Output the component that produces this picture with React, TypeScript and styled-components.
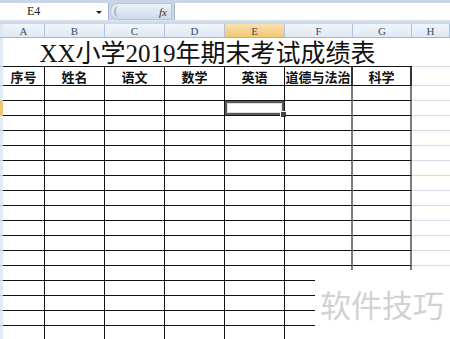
import React from 'react'
import styled, { createGlobalStyle, css } from 'styled-components'

const GlobalStyle = createGlobalStyle`
  html, body {
    margin: 0;
    padding: 0;
    background: #fff;
    overflow: hidden;
  }
  body {
    font-family: "Liberation Serif", "Noto Sans CJK SC", serif;
  }
`

const columns = ['A', 'B', 'C', 'D', 'E', 'F', 'G', 'H']
const headers = ['序号', '姓名', '语文', '数学', '英语', '道德与法治', '科学']
const DATA_ROWS = 17
const SELECTED_ROW = 1
const SELECTED_COL = 4

type Edge = 'black' | 'gray'

const App: React.FC = () => {
    const edgeOf = (i: number): Edge => (i >= 5 ? 'gray' : 'black')

    return (
        <StWindow>
            <GlobalStyle />
            <StFormulaBar>
                <StNameBox>
                    <StNameText>E4</StNameText>
                    <StArrow />
                </StNameBox>
                <StCapsule>
                    <StCapsuleKnob />
                    <StFx>fx</StFx>
                </StCapsule>
                <StFormulaInput />
            </StFormulaBar>
            <StBand />
            <StSheet>
                <StCorner />
                {columns.map((c, i) => (
                    <StColHead key={c} $active={i === SELECTED_COL}>
                        {c}
                    </StColHead>
                ))}

                <StRowHead />
                <StTitle>XX小学2019年期末考试成绩表</StTitle>
                <StGridCell />

                <StRowHead />
                {headers.map((h, i) => (
                    <StHeadCell key={h} $edge={edgeOf(i)}>
                        {h}
                    </StHeadCell>
                ))}
                <StGridCell />

                {Array.from({ length: DATA_ROWS }).map((_, r) => (
                    <React.Fragment key={r}>
                        <StRowHead $active={r === SELECTED_ROW} />
                        {headers.map((h, i) => (
                            <StDataCell
                                key={h}
                                $edge={edgeOf(i)}
                                $selected={r === SELECTED_ROW && i === SELECTED_COL}
                            />
                        ))}
                        <StGridCell />
                    </React.Fragment>
                ))}
            </StSheet>
            <StWatermark>软件技巧</StWatermark>
        </StWindow>
    )
}

const StWindow = styled.div`
    position: relative;
    width: 450px;
    height: 339px;
    overflow: hidden;
    background: #fff;
`

const StFormulaBar = styled.div`
    display: flex;
    align-items: stretch;
    height: 20px;
    padding-top: 3px;
    background: #c9d6e7;
    box-sizing: border-box;
`

const StNameBox = styled.div`
    position: relative;
    display: flex;
    align-items: center;
    width: 108px;
    background: #fff;
    border-right: 1px solid #a7b9d0;
`

const StNameText = styled.span`
    margin-left: 27px;
    font-family: "Liberation Serif", serif;
    font-size: 12px;
    color: #222;
`

const StArrow = styled.span`
    position: absolute;
    left: 96px;
    top: 8px;
    width: 0;
    height: 0;
    border-left: 3px solid transparent;
    border-right: 3px solid transparent;
    border-top: 3px solid #222;
`

const StCapsule = styled.div`
    display: flex;
    align-items: center;
    justify-content: space-between;
    width: 62px;
    margin-left: 1px;
    padding: 0 4px 0 3px;
    box-sizing: border-box;
    border-radius: 9px 0 0 9px;
    background: linear-gradient(#eef2f8, #cfdae9);
    border: 1px solid #b6c5d9;
`

const StCapsuleKnob = styled.span`
    width: 9px;
    height: 11px;
    border-radius: 50%;
    border-left: 2px solid #a9b8cc;
    box-sizing: border-box;
`

const StFx = styled.span`
    font-family: "Liberation Serif", serif;
    font-style: italic;
    font-size: 11px;
    color: #333;
`

const StFormulaInput = styled.div`
    flex: 1;
    margin-left: 2px;
    background: #fff;
    border-left: 1px solid #a7b9d0;
`

const StBand = styled.div`
    height: 4px;
    background: linear-gradient(#dbe4f0, #c8d5e6);
`

const StSheet = styled.div`
    display: grid;
    grid-template-columns: 3px 42px 60px 60px 60px 60px 68px 59px 1fr;
    grid-template-rows: 14px 29px 19px;
    grid-auto-rows: 15px;
`

const StCorner = styled.div`
    background: #dfe7f2;
    border-bottom: 1px solid #9eb6ce;
`

const StColHead = styled.div<{ $active?: boolean }>`
    display: flex;
    align-items: center;
    justify-content: center;
    box-sizing: border-box;
    font-family: "Liberation Serif", serif;
    font-size: 11px;
    color: #3c4d62;
    border-right: 1px solid #b2c3d8;
    border-bottom: 1px solid #9eb6ce;
    background: ${(p) =>
        p.$active ? 'linear-gradient(#fae2b0, #f3c66f)' : 'linear-gradient(#f1f5fa, #dfe8f3)'};
`

const StRowHead = styled.div<{ $active?: boolean }>`
    box-sizing: border-box;
    background: ${(p) => (p.$active ? '#f3c66f' : '#e2eaf4')};
    border-bottom: 1px solid #b9c9dc;
`

const StTitle = styled.div`
    grid-column: span 7;
    display: flex;
    align-items: center;
    justify-content: center;
    box-sizing: border-box;
    padding-top: 2px;
    border-bottom: 1px solid #111;
    font-family: "Liberation Serif", "Noto Sans CJK SC", serif;
    font-size: 25px;
    line-height: 1;
    color: #111;
    white-space: nowrap;
`

const edgeStyle = css<{ $edge: Edge }>`
    border-right: ${(p) => (p.$edge === 'gray' ? '2px solid #7c7c7c' : '1px solid #111')};
    border-bottom: 1px solid #111;
`

const StHeadCell = styled.div<{ $edge: Edge }>`
    display: flex;
    align-items: center;
    justify-content: center;
    box-sizing: border-box;
    white-space: nowrap;
    font-family: "Noto Sans CJK SC", sans-serif;
    font-weight: 700;
    font-size: 13px;
    color: #111;
    ${edgeStyle}
    border-right-color: ${(p) => (p.$edge === 'gray' ? '#333' : '#111')};
`

const StDataCell = styled.div<{ $edge: Edge; $selected?: boolean }>`
    position: relative;
    box-sizing: border-box;
    ${edgeStyle}
    ${(p) =>
        p.$selected &&
        css`
            box-shadow: inset 0 0 0 2px #5a5a5a, inset 0 0 0 3px #ddd;
            &::after {
                content: '';
                position: absolute;
                right: -3px;
                bottom: -3px;
                width: 5px;
                height: 5px;
                background: #444;
                border: 1px solid #fff;
            }
        `}
`

const StGridCell = styled.div`
    border-bottom: 1px solid #d4dbe6;
`

const StWatermark = styled.div`
    position: absolute;
    left: 315px;
    top: 270px;
    right: 0;
    bottom: 0;
    padding: 18px 0 0 5px;
    background: #fff;
    font-family: "Noto Sans CJK SC", sans-serif;
    font-size: 31px;
    line-height: 1;
    color: #d2d2d2;
    white-space: nowrap;
`

export default App
